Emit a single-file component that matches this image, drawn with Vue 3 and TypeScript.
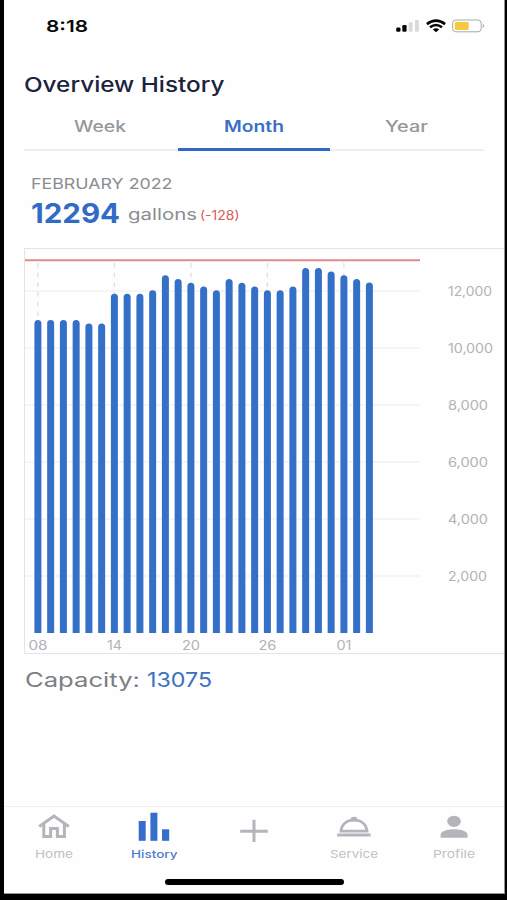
<script setup lang="ts">
import { h, type FunctionalComponent } from 'vue'

interface LabelProps { text: string; width: number; size: number; weight?: number }

// One line of text fitted to a fixed width, with its baseline at the box's bottom.
const FitText: FunctionalComponent<LabelProps> = (p) =>
  h('svg', { width: p.width, height: p.size, style: { overflow: 'visible', display: 'block', flex: 'none' } }, [
    h('text', {
      x: 0, y: p.size, 'font-size': p.size, 'font-weight': p.weight ?? 400, fill: 'currentColor',
      textLength: p.width, lengthAdjust: 'spacingAndGlyphs',
    }, p.text),
  ])
FitText.props = ['text', 'width', 'size', 'weight']

const tabs = [
  { text: 'Week', width: 52, active: false },
  { text: 'Month', width: 60, active: true },
  { text: 'Year', width: 43, active: false },
]

const gallons = [
  10980, 10980, 10980, 10980, 10860, 10860, 11900, 11900, 11900, 12030, 12550, 12420, 12290, 12160,
  12030, 12420, 12290, 12160, 12030, 12030, 12160, 12810, 12810, 12680, 12550, 12420, 12294,
]
const base = 384
const yOf = (v: number) => base - (v / 1000) * 28.5
const xOf = (i: number) => 12.9 + i * 12.75
const barPath = (v: number, i: number) => {
  const x = xOf(i) - 3.5
  const y = yOf(v)
  return `M${x} ${base}V${y + 3.5}a3.5 3.5 0 0 1 7 0V${base}Z`
}
const yTicks = [
  { v: 12000, text: '12,000', width: 44 },
  { v: 10000, text: '10,000', width: 45 },
  { v: 8000, text: '8,000', width: 40 },
  { v: 6000, text: '6,000', width: 40 },
  { v: 4000, text: '4,000', width: 40 },
  { v: 2000, text: '2,000', width: 39 },
]
const xTicks = [
  { i: 0, text: '08', width: 19 },
  { i: 6, text: '14', width: 15 },
  { i: 12, text: '20', width: 18 },
  { i: 18, text: '26', width: 18 },
  { i: 24, text: '01', width: 15 },
]

const nav = [
  { id: 'home', text: 'Home', width: 38 },
  { id: 'history', text: 'History', width: 46.5 },
  { id: 'add', text: '', width: 0 },
  { id: 'service', text: 'Service', width: 48 },
  { id: 'profile', text: 'Profile', width: 42 },
]
</script>

<template>
  <div class="device">
    <main class="screen">
      <header class="status">
        <FitText text="8:18" :width="42" :size="16.5" :weight="600" />
        <div class="indicators">
          <svg width="24" height="14" viewBox="0 0 24 14">
            <rect x="0.2" y="8.5" width="4.3" height="4.3" rx="1.3" fill="#050505" />
            <rect x="6.3" y="6" width="4.3" height="6.8" rx="1.3" fill="#050505" />
            <rect x="12.7" y="3.2" width="4" height="9.6" rx="1" fill="#dadada" />
            <rect x="18.9" y="1" width="4" height="11.8" rx="1" fill="#dadada" />
          </svg>
          <svg class="wifi" width="20" height="14" viewBox="0 0 20 14">
            <g fill="none" stroke="#050505" stroke-width="2.6">
              <path d="M0.9 5.1Q10 -1.8 19.1 5.1" />
              <path d="M4 8.3Q10 3.7 16 8.3" />
            </g>
            <path d="M6.8 10.6Q10 8.1 13.2 10.6L10 13.2Z" fill="#050505" />
          </svg>
          <svg class="battery" width="34" height="14" viewBox="0 0 34 14">
            <rect x="0.6" y="1" width="28.6" height="11.8" rx="3.2" fill="#fff" stroke="#a9a9a2" />
            <rect x="2.7" y="3" width="14" height="7.9" rx="1.3" fill="#f5c843" />
            <path d="M30.8 4.8q2.4 2.1 0 4.3Z" fill="#999" />
          </svg>
        </div>
      </header>

      <h1 class="title"><FitText text="Overview History" :width="200.5" :size="20.5" :weight="500" /></h1>

      <nav class="tabs">
        <div v-for="t in tabs" :key="t.text" class="tab" :class="{ active: t.active }">
          <FitText :text="t.text" :width="t.width" :size="15.5" :weight="t.active ? 600 : 500" />
        </div>
      </nav>

      <section class="summary">
        <FitText class="period" text="FEBRUARY 2022" :width="141.5" :size="15" :weight="400" />
        <div class="reading">
          <FitText class="amount" text="12294" :width="89" :size="26.5" :weight="700" />
          <FitText class="unit" text="gallons" :width="69" :size="15.5" :weight="400" />
          <FitText class="delta" text="(-128)" :width="39.5" :size="12.5" :weight="400" />
        </div>
      </section>

      <section class="chart">
        <svg width="479" height="404" viewBox="0 0 479 404">
          <g stroke="#ececee" stroke-width="1.2">
            <line v-for="t in yTicks" :key="t.v" x1="0" x2="395" :y1="yOf(t.v)" :y2="yOf(t.v)" />
          </g>
          <g stroke="#dddde0" stroke-width="1.3" stroke-dasharray="4.5 5.2">
            <line v-for="t in xTicks" :key="t.i" :x1="xOf(t.i)" :x2="xOf(t.i)" y1="14" :y2="base" />
          </g>
          <path v-for="(v, i) in gallons" :key="i" :d="barPath(v, i)" fill="#3570c8" />
          <line x1="0" x2="395" y1="11.3" y2="11.3" stroke="#df8d88" stroke-width="2" />
          <g class="ticks">
            <text v-for="t in yTicks" :key="t.text" x="423" :y="yOf(t.v) + 4.6" :textLength="t.width" lengthAdjust="spacingAndGlyphs">{{ t.text }}</text>
            <text v-for="t in xTicks" :key="t.text" :x="xOf(t.i) - t.width / 2" y="401" :textLength="t.width" lengthAdjust="spacingAndGlyphs">{{ t.text }}</text>
          </g>
        </svg>
      </section>

      <section class="capacity">
        <FitText text="Capacity:" :width="115" :size="20" />
        <FitText class="value" text="13075" :width="65" :size="20" />
      </section>

      <footer class="bottom">
        <div class="nav">
          <div v-for="n in nav" :key="n.id" class="item" :class="{ current: n.id === 'history' }">
            <svg class="icon" width="36" height="32" viewBox="0 0 36 32">
              <g v-if="n.id === 'home'" fill="none" stroke="currentColor" stroke-width="3">
                <path d="M3.2 16.4L18 6L32.8 16.4" />
                <path d="M7.8 14V26.6H14.6V18.5H21.4V26.6H28.4V14" />
              </g>
              <g v-else-if="n.id === 'history'" fill="currentColor">
                <rect x="2.7" y="11" width="7" height="19.8" />
                <rect x="14.4" y="2.7" width="7" height="28.1" />
                <rect x="26" y="19.3" width="7.2" height="11.5" />
              </g>
              <path v-else-if="n.id === 'add'" d="M4.2 21.3H31.8M18 9.7V32" fill="none" stroke="currentColor" stroke-width="3" />
              <g v-else-if="n.id === 'service'" fill="none" stroke="currentColor">
                <path d="M4.9 21.2C5.7 14.3 10.8 10.2 18 10.2S30.3 14.3 31.1 21.2Z" stroke-width="2.7" />
                <path d="M1.2 25.1H34.6" stroke-width="3" />
                <ellipse cx="18" cy="9" rx="3.3" ry="2.3" fill="currentColor" stroke="none" />
              </g>
              <g v-else fill="currentColor">
                <ellipse cx="18" cy="11.3" rx="6.8" ry="5.6" />
                <path d="M4.6 27.8V24.8C4.6 21.5 11 19.3 18 19.3S31.6 21.5 31.6 24.8V27.8Z" />
              </g>
            </svg>
            <FitText v-if="n.text" class="caption" :text="n.text" :width="n.width" :size="11" :weight="n.id === 'history' ? 500 : 400" />
          </div>
        </div>
        <div class="handle"></div>
      </footer>
    </main>
  </div>
</template>

<style>
body { margin: 0; background: #000; }
</style>

<style scoped>
.device {
  box-sizing: border-box;
  width: 507px;
  height: 900px;
  padding: 0 2px 6px 4px;
  background: #000;
  font-family: Inter, "Liberation Sans", sans-serif;
  overflow: hidden;
}
.screen {
  box-sizing: border-box;
  height: 894px;
  display: flex;
  flex-direction: column;
  background: #fefefe;
  border: solid #929292;
  border-width: 0 1px 1px 0;
  overflow: hidden;
}
.status {
  display: flex;
  justify-content: space-between;
  padding: 15px 18px 0 42px;
  height: 17px;
  color: #0a0a0a;
}
.indicators { display: flex; padding-top: 3.5px; }
.wifi { margin-left: 6px; }
.battery { margin-left: 6.5px; }
.title { margin: 0; padding: 38.5px 0 0 20px; color: #1b233d; }
.tabs {
  box-sizing: border-box;
  display: flex;
  width: 460px;
  height: 42px;
  margin: 18px 0 0 20px;
  flex: none;
  box-shadow: inset 0 -2px #efeff0;
}
.tab {
  box-sizing: border-box;
  flex: 1;
  display: flex;
  justify-content: center;
  padding: 7px 1px 0 0;
  color: #94979c;
}
.tab.active { color: #3970c6; padding-right: 0; border-bottom: 3px solid #3268c3; }
.summary { padding: 23px 0 0 26.5px; color: #8a8d91; }
.reading { display: flex; align-items: flex-end; margin-top: 7px; }
.amount { color: #316bc5; }
.unit { margin: 0 3px 3.5px 8px; }
.delta { color: #da5b57; margin-bottom: 3.5px; }
.chart {
  box-sizing: border-box;
  height: 406px;
  flex: none;
  margin: 25.8px 0 0 20px;
  border: 1px solid #e4e4e6;
  border-right: 0;
}
.chart svg { display: block; }
.ticks { fill: #b0b3b7; font-size: 12.5px; }
.capacity { display: flex; gap: 7px; padding: 13px 0 0 21px; color: #7c7e82; }
.value { color: #3c70c0; }
.bottom { margin-top: auto; height: 86px; border-top: 1px solid #eeeeef; }
.nav { display: flex; color: #b3b5bb; height: 72px; }
.item { width: 100.2px; display: flex; flex-direction: column; align-items: center; padding-top: 3px; }
.icon { display: block; overflow: visible; }
.caption { margin-top: 4.5px; color: #bfc1c5; }
.current { color: #366fcb; }
.current .caption { color: #4e7cca; }
.handle { width: 179px; height: 6px; border-radius: 3px; background: #000; margin: 0 auto; }
</style>
